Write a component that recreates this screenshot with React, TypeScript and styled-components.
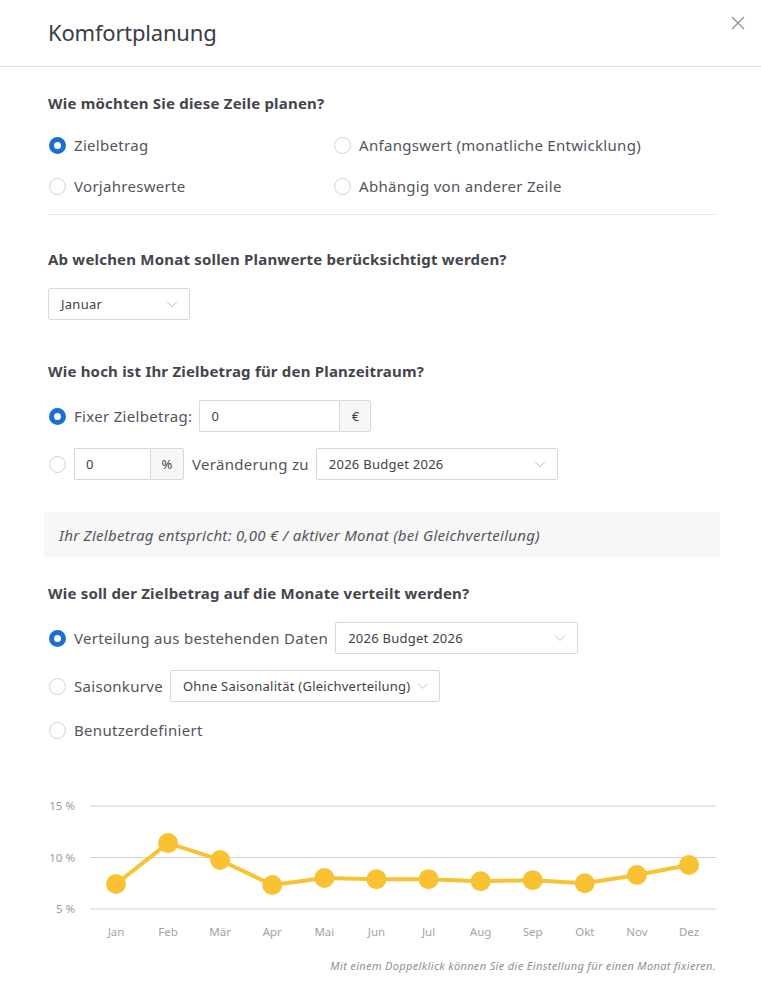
import React from "react";
import styled, { createGlobalStyle } from "styled-components";

const Global = createGlobalStyle`
  html, body { margin: 0; padding: 0; background: #fff; }
  body { font-family: "Noto Sans", "Open Sans", sans-serif; color: #4b4b55; }
  * { box-sizing: border-box; }
`;

const Dialog = styled.div`
  width: 761px;
  background: #fff;
`;

const Header = styled.header`
  height: 67px;
  border-bottom: 1px solid #dde2e7;
  display: flex;
  align-items: center;
  justify-content: space-between;
  padding: 0 14px 2px 48px;
`;

const Title = styled.h1`
  margin: 0;
  font-size: 22px;
  font-weight: 400;
  color: #3c3c46;
  letter-spacing: -0.2px;
`;

const Close = styled.button`
  border: 0;
  background: none;
  padding: 0;
  width: 16px;
  height: 16px;
  align-self: flex-start;
  margin-top: 16px;
  cursor: pointer;
  display: flex;
`;

const Body = styled.div`
  padding: 26px 45px 0 48px;
  display: flex;
  flex-direction: column;
`;

const Heading = styled.h2<{ $mt?: number }>`
  margin: ${(p) => p.$mt ?? 0}px 0 0;
  font-size: 15px;
  line-height: 20px;
  letter-spacing: 0.2px;
  font-weight: 700;
  color: #45454e;
`;

const OptionGrid = styled.div`
  display: grid;
  grid-template-columns: 285px 1fr;
  row-gap: 17px;
  margin-top: 20px;
`;

const Separator = styled.hr`
  border: 0;
  border-top: 1px solid #e8eaed;
  margin: 16px 0 0;
  height: 0;
`;

const Row = styled.div<{ $mt?: number; $h?: number }>`
  display: flex;
  align-items: center;
  height: ${(p) => p.$h ?? 32}px;
  margin-top: ${(p) => p.$mt ?? 0}px;
`;

const RadioLabel = styled.label<{ $bare?: boolean }>`
  display: flex;
  align-items: center;
  height: 24px;
  font-size: 15px;
  letter-spacing: 0.3px;
  color: #53535e;
  white-space: nowrap;
  margin-right: ${(p) => (p.$bare ? 0 : 7)}px;
`;

const RadioCircle = styled.span<{ $on?: boolean }>`
  width: 17px;
  height: 17px;
  border-radius: 50%;
  flex: none;
  margin: 0 8px 0 1px;
  background: #fff;
  border: ${(p) => (p.$on ? "5px solid #1b6ed6" : "1px solid #cfd2d6")};
`;

const SelectBox = styled.div<{ $w: number; $mt?: number }>`
  width: ${(p) => p.$w}px;
  height: 32px;
  border: 1px solid #d9d9d9;
  border-radius: 2px;
  margin-top: ${(p) => p.$mt ?? 0}px;
  display: flex;
  align-items: center;
  justify-content: space-between;
  gap: 6px;
  padding: 0 11px 0 12px;
  font-size: 13px;
  letter-spacing: 0.25px;
  color: #3f3f48;
  background: #fff;
  flex: none;
  white-space: nowrap;
`;

const InputGroup = styled.div<{ $w: number }>`
  display: flex;
  width: ${(p) => p.$w}px;
  height: 32px;
  flex: none;
  margin-right: 8px;
`;

const InputField = styled.div`
  flex: 1;
  border: 1px solid #d9d9d9;
  border-right: 0;
  border-radius: 2px 0 0 2px;
  display: flex;
  align-items: center;
  padding-left: 11px;
  font-size: 13px;
  color: #3f3f48;
`;

const Addon = styled.div<{ $w: number }>`
  width: ${(p) => p.$w}px;
  border: 1px solid #d9d9d9;
  border-radius: 0 2px 2px 0;
  background: #f7f7f7;
  display: flex;
  align-items: center;
  justify-content: center;
  font-size: 13px;
  color: #3f3f48;
`;

const InlineText = styled.span`
  font-size: 15px;
  letter-spacing: 0.3px;
  color: #53535e;
  margin-right: 7px;
  white-space: nowrap;
`;

const Info = styled.div`
  margin: 32px -4px 0;
  height: 45px;
  background: #f7f7f7;
  display: flex;
  align-items: center;
  padding-left: 15px;
  font-size: 15px;
  letter-spacing: 0.3px;
  font-style: italic;
  color: #56565f;
`;

const ChartWrap = styled.div`
  margin-top: 48px;
  height: 152px;
`;

const Footnote = styled.p`
  margin: 16px 0 0;
  text-align: right;
  font-size: 11px;
  letter-spacing: 0.35px;
  font-style: italic;
  color: #8f8f97;
`;

const Chevron = () => (
  <svg width="12" height="8" viewBox="0 0 12 8" fill="none">
    <path d="M1 1.5 L6 6.5 L11 1.5" stroke="#bfbfbf" strokeWidth="1" />
  </svg>
);

const Select: React.FC<{ w: number; value: string; mt?: number }> = ({ w, value, mt }) => (
  <SelectBox $w={w} $mt={mt}>
    <span>{value}</span>
    <Chevron />
  </SelectBox>
);

const Radio: React.FC<{ on?: boolean; label?: string }> = ({ on, label }) => (
  <RadioLabel $bare={!label}>
    <RadioCircle $on={on} />
    {label}
  </RadioLabel>
);

const months = ["Jan", "Feb", "Mär", "Apr", "Mai", "Jun", "Jul", "Aug", "Sep", "Okt", "Nov", "Dez"];
const values = [7.43, 11.4, 9.76, 7.33, 8.01, 7.9, 7.9, 7.7, 7.8, 7.5, 8.3, 9.27];

const Chart = () => {
  const yFor = (v: number) => 119 - (v - 5) * 10.3;
  const xFor = (i: number) => 68 + i * 52.09;
  const pts = values.map((v, i) => `${xFor(i)},${yFor(v)}`).join(" ");
  return (
    <svg width="668" height="152" viewBox="0 0 668 152">
      {[15, 10, 5].map((v) => (
        <g key={v}>
          <line x1="42" x2="668" y1={yFor(v)} y2={yFor(v)} stroke="#cfcfd4" strokeWidth="1" />
          <text
            x="27"
            y={yFor(v) + 4}
            textAnchor="end"
            fontSize="11.5"
            fill="#9a9aa2"
            fontFamily="Noto Sans, sans-serif"
          >
            {v} %
          </text>
        </g>
      ))}
      <polyline points={pts} fill="none" stroke="#f9c233" strokeWidth="4" strokeLinejoin="round" />
      {values.map((v, i) => (
        <circle key={i} cx={xFor(i)} cy={yFor(v)} r="10" fill="#f9c233" />
      ))}
      {months.map((m, i) => (
        <text
          key={m}
          x={xFor(i)}
          y="146"
          textAnchor="middle"
          fontSize="11.5"
          fill="#a3a3aa"
          fontFamily="Noto Sans, sans-serif"
        >
          {m}
        </text>
      ))}
    </svg>
  );
};

export default function App() {
  return (
    <>
      <Global />
      <Dialog>
        <Header>
          <Title>Komfortplanung</Title>
          <Close aria-label="Schließen">
            <svg width="14" height="14" viewBox="0 0 14 14">
              <path d="M1 1 L13 13 M13 1 L1 13" stroke="#8c8c8c" strokeWidth="1.2" />
            </svg>
          </Close>
        </Header>
        <Body>
          <Heading>Wie möchten Sie diese Zeile planen?</Heading>
          <OptionGrid>
            <Radio on label="Zielbetrag" />
            <Radio label="Anfangswert (monatliche Entwicklung)" />
            <Radio label="Vorjahreswerte" />
            <Radio label="Abhängig von anderer Zeile" />
          </OptionGrid>
          <Separator />

          <Heading $mt={34}>Ab welchen Monat sollen Planwerte berücksichtigt werden?</Heading>
          <Select w={142} value="Januar" mt={19} />

          <Heading $mt={41}>Wie hoch ist Ihr Zielbetrag für den Planzeitraum?</Heading>
          <Row $mt={19}>
            <Radio on label="Fixer Zielbetrag:" />
            <InputGroup $w={172}>
              <InputField>0</InputField>
              <Addon $w={32}>€</Addon>
            </InputGroup>
          </Row>
          <Row $mt={16}>
            <Radio />
            <InputGroup $w={110}>
              <InputField>0</InputField>
              <Addon $w={34}>%</Addon>
            </InputGroup>
            <InlineText>Veränderung zu</InlineText>
            <Select w={242} value="2026 Budget 2026" />
          </Row>

          <Info>Ihr Zielbetrag entspricht: 0,00 € / aktiver Monat (bei Gleichverteilung)</Info>

          <Heading $mt={26}>Wie soll der Zielbetrag auf die Monate verteilt werden?</Heading>
          <Row $mt={19}>
            <Radio on label="Verteilung aus bestehenden Daten" />
            <Select w={243} value="2026 Budget 2026" />
          </Row>
          <Row $mt={16}>
            <Radio label="Saisonkurve" />
            <Select w={270} value="Ohne Saisonalität (Gleichverteilung)" />
          </Row>
          <Row $mt={16} $h={24}>
            <Radio label="Benutzerdefiniert" />
          </Row>

          <ChartWrap>
            <Chart />
          </ChartWrap>
          <Footnote>Mit einem Doppelklick können Sie die Einstellung für einen Monat fixieren.</Footnote>
        </Body>
      </Dialog>
    </>
  );
}
